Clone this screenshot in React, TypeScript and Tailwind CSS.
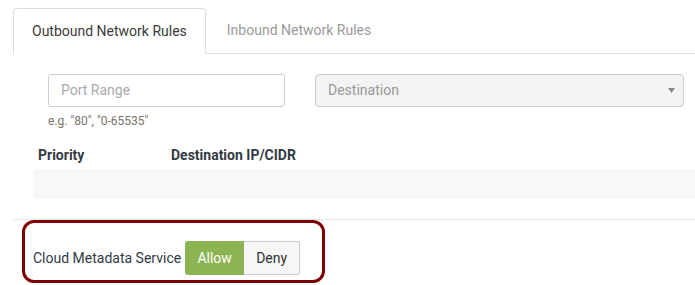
import React from "react";

export default function App() {
  return (
    <div
      className="w-[695px] h-[285px] overflow-hidden bg-white text-[#333]"
      style={{ fontFamily: "Roboto, 'Liberation Sans', sans-serif" }}
    >
      {/* Tabs */}
      <div className="pt-[8px] pl-[13px]">
        <div className="flex border-b border-[#dddddd] h-[46px]">
          <div className="h-[46px] px-[18px] border border-[#dddddd] border-b-white rounded-t-[4px] bg-white flex items-center text-[14px] text-[#3a3a3a] -mb-px">
            Outbound Network Rules
          </div>
          <div className="h-[45px] pl-[21px] pr-[20px] flex items-center text-[14px] text-[#9a9a9a]">
            Inbound Network Rules
          </div>
        </div>
      </div>

      {/* Form row */}
      <div className="flex pl-[48px] pt-[20px]">
        <div className="flex flex-col">
          <div className="w-[237px] h-[33px] border border-[#cccccc] rounded-[3px] flex items-center pl-[12px] text-[14px] text-[#aaaaaa]">
            Port Range
          </div>
          <div className="mt-[6px] text-[12px] leading-[17px] text-[#7a736b]">
            e.g. "80", "0-65535"
          </div>
        </div>
        <div className="ml-[30px] w-[369px] h-[33px] border border-[#cccccc] rounded-[4px] bg-[#f3f3f3] flex items-center justify-between pl-[12px] pr-[8px] text-[14px] text-[#999999]">
          <span>Destination</span>
          <svg width="7" height="5" viewBox="0 0 7 5">
            <path d="M0 0 L7 0 L3.5 5 Z" fill="#888888" />
          </svg>
        </div>
      </div>

      {/* Table */}
      <div className="pl-[33px] mt-[11px]">
        <div className="flex h-[28px] items-center text-[14px] font-bold text-[#333a44]">
          <div className="pl-[5px] w-[138px]">Priority</div>
          <div>Destination IP/CIDR</div>
        </div>
        <div className="h-[30px] bg-[#f8f8f8]" />
      </div>

      {/* Separator */}
      <div className="ml-[13px] mt-[20px] h-px bg-[#e6e6e6]" />

      {/* Cloud metadata */}
      <div className="ml-[22px] w-[303px] h-[63px] border-[3px] border-[#7f0000] rounded-[12px] flex items-start pl-[8px] pt-[18px]">
        <span className="text-[14px] leading-[34px] text-[#333a45]">Cloud Metadata Service</span>
        <div className="ml-[4px] flex h-[34px]">
          <div className="w-[59px] bg-[#8cb453] text-white text-[14px] flex items-center justify-center rounded-l-[3px]">
            Allow
          </div>
          <div className="w-[56px] bg-[#f6f6f6] border border-[#cccccc] border-l-0 text-[#333] text-[14px] flex items-center justify-center rounded-r-[3px]">
            Deny
          </div>
        </div>
      </div>
    </div>
  );
}
